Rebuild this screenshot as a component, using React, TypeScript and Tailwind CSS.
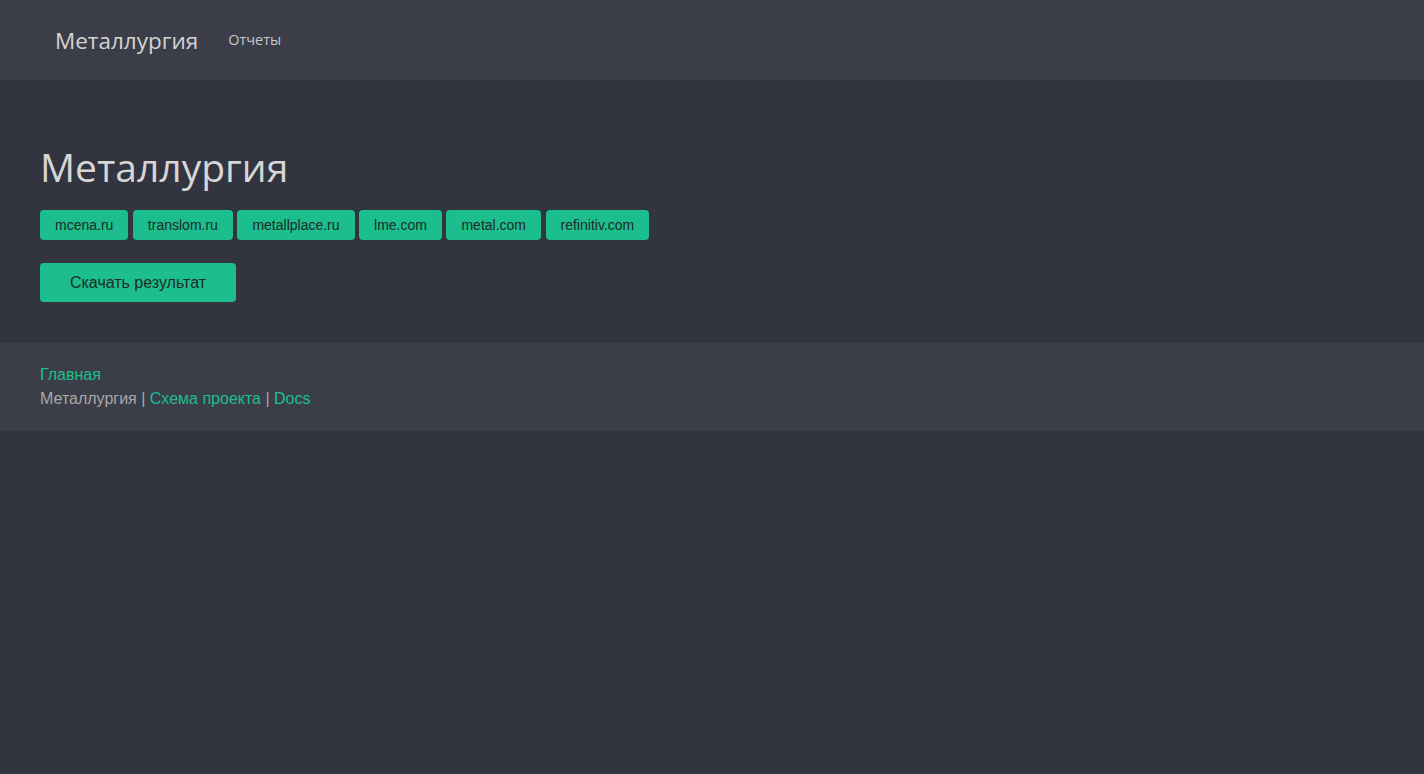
import React from "react";

const sources = ["mcena.ru", "translom.ru", "metallplace.ru", "lme.com", "metal.com", "refinitiv.com"];

export default function App() {
  return (
    <div className="min-h-[774px] bg-[#323440] font-['Noto_Sans',sans-serif]">
      <header className="h-[80px] bg-[#3b3e48] flex items-center pl-[55px] pt-[2px]">
        <span className="text-[22.5px] text-[#d4d4d4] font-['Open_Sans',sans-serif] leading-none">Металлургия</span>
        <span className="ml-[30px] text-[14.5px] text-[#c8c8c8] font-['Open_Sans',sans-serif] leading-none pb-[1px]">Отчеты</span>
      </header>
      <main className="px-[40px] pt-[62px] pb-[41px]">
        <h1 className="text-[39px] leading-[50px] text-[#d6d6d6] font-['Open_Sans',sans-serif]">Металлургия</h1>
        <div className="mt-[18px] flex gap-[4.5px]">
          {sources.map((s) => (
            <button
              key={s}
              className="h-[30px] px-[15px] rounded-[4px] bg-[#1cbe8d] text-[#1e2b28] text-[14px] font-['Liberation_Sans',Arial,sans-serif]"
            >
              {s}
            </button>
          ))}
        </div>
        <button className="mt-[23px] h-[39px] w-[196px] rounded-[4px] bg-[#1cbe8d] text-[#1e2b28] text-[16px] font-['Liberation_Sans',Arial,sans-serif]">
          Скачать результат
        </button>
      </main>
      <footer className="bg-[#3b3e48] px-[40px] py-[20px] text-[16px] leading-[24px] font-['Liberation_Sans',Arial,sans-serif]">
        <div className="text-[#1cbe8d]">Главная</div>
        <div className="text-[#a8a8a8]">
          Металлургия | <span className="text-[#1cbe8d]">Схема проекта</span> | <span className="text-[#1cbe8d]">Docs</span>
        </div>
      </footer>
    </div>
  );
}
